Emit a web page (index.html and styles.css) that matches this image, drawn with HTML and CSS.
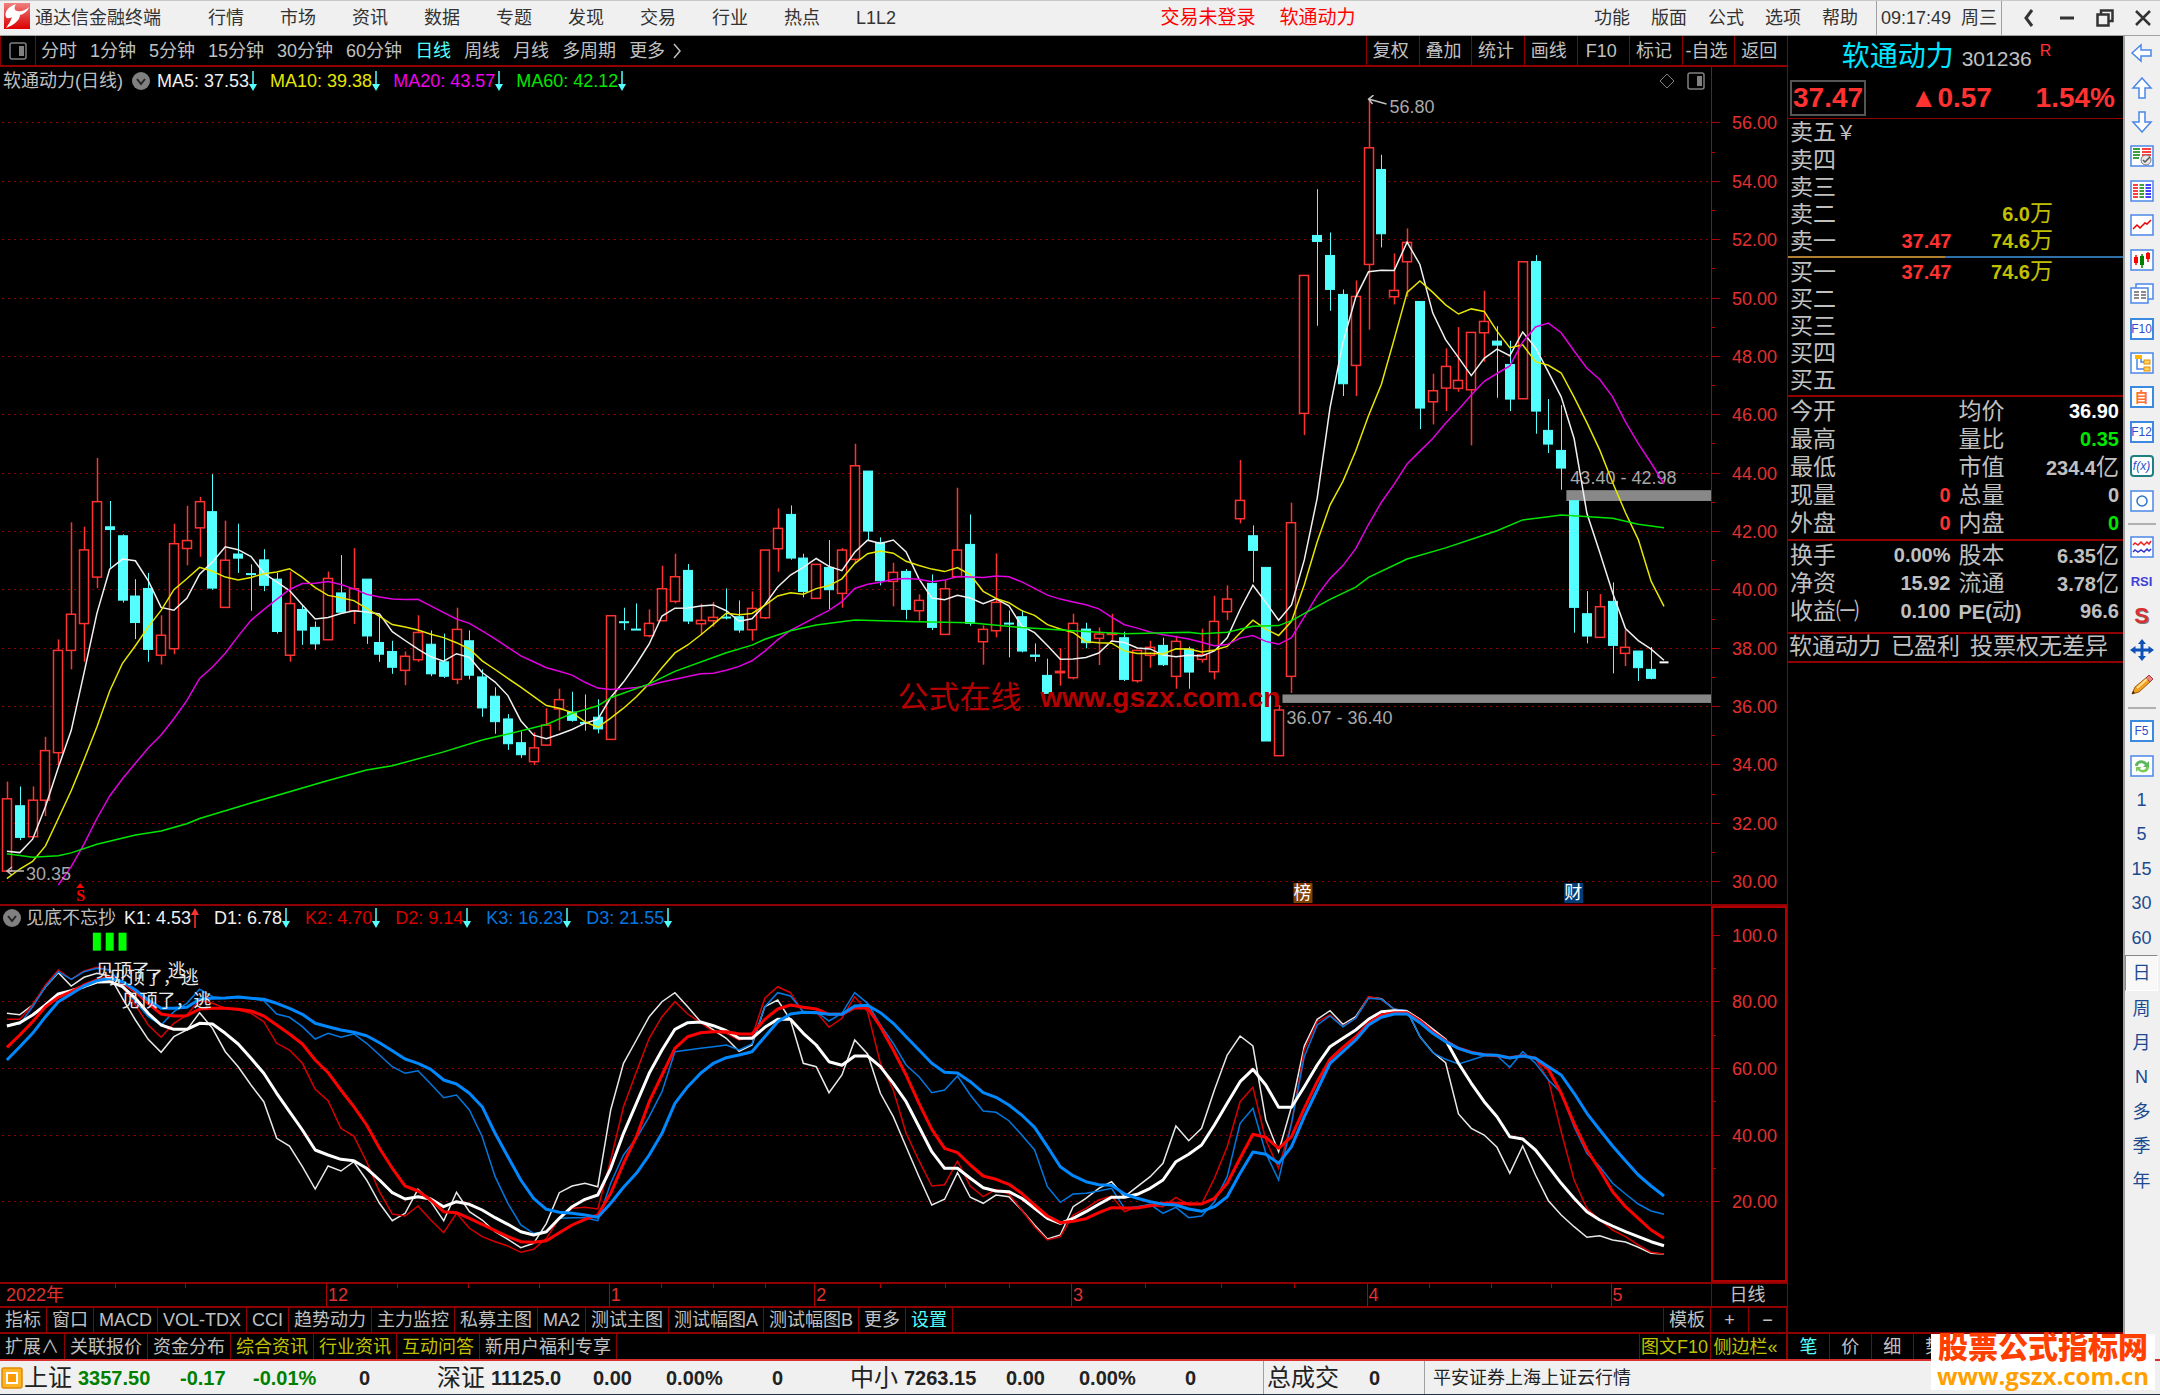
FILE: index.html
```html
<!DOCTYPE html>
<html lang="zh-CN">
<head>
<meta charset="utf-8">
<title>通达信金融终端</title>
<link rel="stylesheet" href="styles.css">
</head>
<body>

<svg width="0" height="0" class="defs">
  <symbol id="down" viewBox="0 0 8 20"><path d="M4 0V16" stroke="#54ffff" stroke-width="1.5"/><path d="M0 13H8L4 20Z" fill="#54ffff"/></symbol>
  <symbol id="up" viewBox="0 0 8 20"><path d="M4 20V4" stroke="#ff3232" stroke-width="1.5"/><path d="M0 7H8L4 0Z" fill="#ff3232"/></symbol>
  <symbol id="chev" viewBox="0 0 18 18"><circle cx="9" cy="9" r="9" fill="#808080"/><path d="M5 7L9 12L13 7" fill="none" stroke="#222" stroke-width="2"/></symbol>
  <symbol id="pane" viewBox="0 0 18 18"><rect x="1" y="1" width="16" height="16" rx="2" fill="none" stroke="#808080" stroke-width="1.5"/><rect x="10" y="4" width="5" height="10" fill="#808080"/></symbol>
</svg>

<div class="app">

  <!-- title bar -->
  <header class="title">
    <svg class="logo" viewBox="0 0 26 26"><defs><linearGradient id="lg" x1="0" y1="0" x2="0" y2="1"><stop offset="0" stop-color="#f08080"/><stop offset="0.6" stop-color="#e03030"/><stop offset="1" stop-color="#e00000"/></linearGradient></defs><rect width="26" height="26" fill="url(#lg)"/><path d="M12 1C4 4 0 9 2 14C4 17 8 14 8 14C7 18 4 22 2 25C10 22 16 17 16 12C20 11 24 8 25 4C22 7 17 9 13 8C10 7 10 4 12 1Z" fill="#fff"/></svg>
    <span class="name">通达信金融终端</span>
    <nav class="menu">
      <button>行情</button><button>市场</button><button>资讯</button><button>数据</button><button>专题</button><button>发现</button><button>交易</button><button>行业</button><button>热点</button><button>L1L2</button>
    </nav>
    <div class="login"><a href="#">交易未登录</a><a href="#">软通动力</a></div>
    <nav class="menu2">
      <button>功能</button><button>版面</button><button>公式</button><button>选项</button><button>帮助</button>
    </nav>
    <div class="clock"><span>09:17:49</span><span>周三</span></div>
    <div class="win">
      <button aria-label="返回"><svg viewBox="0 0 18 18"><path d="M12 1L6 9L12 17" fill="none" stroke="#333" stroke-width="3"/></svg></button>
      <button aria-label="最小化"><svg viewBox="0 0 18 18"><path d="M2 9H16" stroke="#333" stroke-width="3"/></svg></button>
      <button aria-label="还原"><svg viewBox="0 0 18 18"><path d="M5 5V1.5H16.5V12H13" fill="none" stroke="#333" stroke-width="2.5"/><rect x="1.5" y="5.5" width="11" height="11" fill="none" stroke="#333" stroke-width="2.5"/></svg></button>
      <button aria-label="关闭"><svg viewBox="0 0 18 18"><path d="M2 2L16 16M16 2L2 16" stroke="#333" stroke-width="2.5"/></svg></button>
    </div>
  </header>

  <div class="work">

    <!-- charts -->
    <main class="left">
      <div class="periods">
        <button class="box" aria-label="侧栏"><svg width="18" height="18"><use href="#pane"/></svg></button>
        <button>分时</button><button>1分钟</button><button>5分钟</button><button>15分钟</button><button>30分钟</button><button>60分钟</button><button class="on">日线</button><button>周线</button><button>月线</button><button>多周期</button><button class="more">更多<svg width="8" height="16" viewBox="0 0 8 16"><path d="M1 1L7 8L1 15" fill="none" stroke="#c0c0c0" stroke-width="1.5"/></svg></button>
        <div class="tools">
          <button>复权</button><button>叠加</button><button>统计</button><button>画线</button><button>F10</button><button>标记</button><button>-自选</button><button>返回</button>
        </div>
      </div>

      <section class="pane main">
        <div class="plot">
          <div class="legend">
            <span class="grey">软通动力(日线)</span>
            <svg class="chev"><use href="#chev"/></svg>
            <span class="white">MA5: 37.53<svg class="arr"><use href="#down"/></svg></span>
            <span class="yellow">MA10: 39.38<svg class="arr"><use href="#down"/></svg></span>
            <span class="pink">MA20: 43.57<svg class="arr"><use href="#down"/></svg></span>
            <span class="green">MA60: 42.12<svg class="arr"><use href="#down"/></svg></span>
            <span class="ends"><svg width="16" height="18"><path d="M8 2L15 9L8 16L1 9Z" fill="none" stroke="#808080"/></svg><svg width="18" height="18"><use href="#pane"/></svg></span>
          </div>
          <svg class="draw" id="kline"></svg>
        </div>
        <svg class="axis" id="kaxis"></svg>
      </section>

      <section class="pane sub">
        <div class="plot">
          <div class="legend">
            <svg class="chev"><use href="#chev"/></svg>
            <span class="grey">见底不忘抄</span>
            <span class="white">K1: 4.53<svg class="arr"><use href="#up"/></svg></span>
            <span class="white">D1: 6.78<svg class="arr"><use href="#down"/></svg></span>
            <span class="red">K2: 4.70<svg class="arr"><use href="#down"/></svg></span>
            <span class="red">D2: 9.14<svg class="arr"><use href="#down"/></svg></span>
            <span class="blue">K3: 16.23<svg class="arr"><use href="#down"/></svg></span>
            <span class="blue">D3: 21.55<svg class="arr"><use href="#down"/></svg></span>
          </div>
          <svg class="draw" id="osc"></svg>
        </div>
        <svg class="axis" id="oaxis"></svg>
      </section>

      <div class="dates"><svg id="dates"></svg><button>日线</button></div>

      <div class="tabs">
        <button>指标</button><button>窗口</button><button>MACD</button><button>VOL-TDX</button><button>CCI</button><button>趋势动力</button><button>主力监控</button><button>私募主图</button><button>MA2</button><button>测试主图</button><button>测试幅图A</button><button>测试幅图B</button><button>更多</button><button class="on">设置</button>
        <span class="fill"></span>
        <button>模板</button><button class="half">+</button><button class="half">−</button>
      </div>
      <div class="tabs second">
        <button>扩展∧</button><button>关联报价</button><button>资金分布</button><button class="gold">综合资讯</button><button class="gold">行业资讯</button><button class="gold">互动问答</button><button>新用户福利专享</button>
        <span class="fill"></span>
        <button class="gold f10">图文F10</button><button class="gold wide">侧边栏«</button>
      </div>
    </main>

    <!-- quote panel -->
    <aside class="quote">
      <div class="head"><b>软通动力</b><span>301236</span><sup>R</sup></div>
      <div class="last"><span class="now">37.47</span><span>▲0.57</span><span>1.54%</span></div>
      <table class="book sell">
        <tr><th>卖五<i>￥</i></th><td></td><td></td></tr>
        <tr><th>卖四</th><td></td><td></td></tr>
        <tr><th>卖三</th><td></td><td></td></tr>
        <tr><th>卖二</th><td></td><td class="vol">6.0<i>万</i></td></tr>
        <tr><th>卖一</th><td class="up">37.47</td><td class="vol">74.6<i>万</i></td></tr>
      </table>
      <div class="ratio"></div>
      <table class="book">
        <tr><th>买一</th><td class="up">37.47</td><td class="vol">74.6<i>万</i></td></tr>
        <tr><th>买二</th><td></td><td></td></tr>
        <tr><th>买三</th><td></td><td></td></tr>
        <tr><th>买四</th><td></td><td></td></tr>
        <tr><th>买五</th><td></td><td></td></tr>
      </table>
      <table class="stats">
        <tr><th>今开</th><td></td><th>均价</th><td class="w">36.90</td></tr>
        <tr><th>最高</th><td></td><th>量比</th><td class="dn">0.35</td></tr>
        <tr><th>最低</th><td></td><th>市值</th><td>234.4<i>亿</i></td></tr>
        <tr><th>现量</th><td class="up">0</td><th>总量</th><td>0</td></tr>
        <tr><th>外盘</th><td class="up">0</td><th>内盘</th><td class="dn">0</td></tr>
      </table>
      <table class="stats tall">
        <tr><th>换手</th><td>0.00%</td><th>股本</th><td>6.35<i>亿</i></td></tr>
        <tr><th>净资</th><td>15.92</td><th>流通</th><td>3.78<i>亿</i></td></tr>
        <tr><th>收益㈠</th><td>0.100</td><th><em>PE(</em>动<em>)</em></th><td>96.6</td></tr>
      </table>
      <div class="note"><span>软通动力</span><span>已盈利</span><span>投票权无差异</span></div>
      <div class="qtabs"><button class="on">笔</button><button>价</button><button>细</button><button>势</button><span></span><span></span><span></span><span></span></div>
    </aside>

    <!-- icon strip -->
    <nav class="strip"><div class="strip-in">
      <button aria-label="后退"><svg viewBox="0 0 24 22"><path d="M2 11L11 3V8H21V14H11V19Z" fill="#fff" stroke="#4a86e8" stroke-width="1.5"/></svg></button>
      <button aria-label="上"><svg viewBox="0 0 24 22"><path d="M12 1L21 11H15V21H9V11H3Z" fill="#fff" stroke="#4a86e8" stroke-width="1.5"/></svg></button>
      <button aria-label="下"><svg viewBox="0 0 24 22"><path d="M12 21L21 11H15V1H9V11H3Z" fill="#fff" stroke="#4a86e8" stroke-width="1.5"/></svg></button>
      <button aria-label="选股"><svg viewBox="0 0 24 22"><rect x="1" y="1" width="22" height="20" fill="#fff" stroke="#4a86e8" stroke-width="1.5"/><path d="M3 4H10M3 7H10M3 10H10M3 13H9" stroke="#008000" stroke-width="1.5"/><path d="M12 4H21M12 7H21M12 10H21" stroke="#f00" stroke-width="1.5"/><circle cx="16" cy="15" r="5" fill="#e8e8e8" stroke="#777"/><path d="M13 15L15 17L20 12" fill="none" stroke="#555" stroke-width="1.5"/></svg></button>
      <button aria-label="报价"><svg viewBox="0 0 24 22"><rect x="1" y="1" width="22" height="20" fill="#fff" stroke="#4a86e8" stroke-width="1.5"/><g stroke-width="1.5"><path d="M3 5H8M3 8H8M3 11H8M3 14H8M3 17H8" stroke="#f00"/><path d="M9.500 5H14M9.500 8H14M9.500 11H14M9.500 14H14M9.500 17H14" stroke="#008000"/><path d="M15.500 5H21M15.500 8H21M15.500 11H21M15.500 14H21M15.500 17H21" stroke="#00f"/></g></svg></button>
      <button aria-label="分时"><svg viewBox="0 0 24 22"><rect x="1" y="1" width="22" height="20" fill="#fff" stroke="#4a86e8" stroke-width="1.5"/><path d="M3 15L7 11L10 14L15 9L17 10L21 6" fill="none" stroke="#e00" stroke-width="1.5"/></svg></button>
      <button aria-label="K线"><svg viewBox="0 0 24 22"><rect x="1" y="1" width="22" height="20" fill="#fff" stroke="#4a86e8" stroke-width="1.5"/><path d="M6 6V16M18 3V13" stroke="#f00" stroke-width="1.5"/><path d="M12 5V19" stroke="#008000" stroke-width="1.5"/><rect x="4" y="8" width="4" height="6" fill="#f00"/><rect x="10" y="7" width="4" height="9" fill="#008000"/><rect x="16" y="4" width="4" height="6" fill="#f00"/></svg></button>
      <button aria-label="资料"><svg viewBox="0 0 24 22"><rect x="6" y="1" width="17" height="15" fill="#fff" stroke="#4a86e8" stroke-width="1.5"/><rect x="1" y="5" width="17" height="15" fill="#fff" stroke="#4a86e8" stroke-width="1.5"/><path d="M4 9H9M4 12H9M4 15H9M11 9H16M11 12H16M11 15H16" stroke="#666" stroke-width="1.5"/></svg></button>
      <button><span class="key">F10</span></button>
      <button aria-label="树"><svg viewBox="0 0 24 22"><rect x="1" y="1" width="22" height="20" fill="#fff" stroke="#4a86e8" stroke-width="1.5"/><path d="M7 6V17H15M11 6V10H15" fill="none" stroke="#4a86e8" stroke-width="1.5"/><rect x="5" y="3" width="7" height="4" fill="#ffb400"/><rect x="14" y="8" width="6" height="4" fill="#ffd060" stroke="#e09000"/><rect x="14" y="15" width="6" height="4" fill="#ffd060" stroke="#e09000"/></svg></button>
      <button><span class="key self">自</span></button>
      <button><span class="key">F12</span></button>
      <button><span class="key fx">f(x)</span></button>
      <button aria-label="圈"><svg viewBox="0 0 24 22"><rect x="1" y="1" width="22" height="20" fill="#fff" stroke="#4a86e8" stroke-width="1.5"/><circle cx="12" cy="11" r="5" fill="none" stroke="#2a76c8" stroke-width="1.5"/></svg></button>
      <hr>
      <button aria-label="叠加"><svg viewBox="0 0 24 22"><rect x="1" y="1" width="22" height="20" fill="#fff" stroke="#4a86e8" stroke-width="1.5"/><path d="M3 9L5 7L8 9L11 6L14 9L17 6L19 8L21 5" fill="none" stroke="#e22" stroke-width="1.5"/><path d="M3 16L5 14L8 16L11 14L14 16L17 13L19 15L21 13" fill="none" stroke="#33c" stroke-width="1.5"/></svg></button>
      <button class="rsi">RSI</button>
      <button class="ess">S</button>
      <button aria-label="移动"><svg viewBox="0 0 24 22"><path d="M12 0L16 5H13.500V9.500H18.500V7L24 11L18.500 15V12.500H13.500V17H16L12 22L8 17H10.500V12.500H5.500V15L0 11L5.500 7V9.500H10.500V5H8Z" fill="#0c50b8"/></svg></button>
      <button aria-label="画笔"><svg viewBox="0 0 24 22"><path d="M2 20L5 13L17 3L21 7L9 18Z" fill="#f0a020" stroke="#a05a10"/><path d="M16 4L19 1L23 5L20 8Z" fill="#f08080" stroke="#a04040"/><path d="M2 20L3 17L5 19Z" fill="#222"/><path d="M7 14L17 5" stroke="#ffe08a" stroke-width="2"/></svg></button>
      <hr>
      <button><span class="key">F5</span></button>
      <button aria-label="刷新"><svg viewBox="0 0 24 22"><rect x="1" y="1" width="22" height="20" fill="#fff" stroke="#4a86e8" stroke-width="1.5"/><path d="M5 11C5 5 13 3 17 8L19 6V12H13L15 10C12 7 8 8 8 11Z" fill="#5cb85c"/><path d="M19 12C19 18 11 19 8 15L6 17V12H11L10 14C12 16 16 15 16 12Z" fill="#7acc5a"/></svg></button>
      <button>1</button><button>5</button><button>15</button><button>30</button><button>60</button><button class="cur">日</button><button>周</button><button>月</button><button>N</button><button>多</button><button>季</button><button>年</button>
    </div></nav>
  </div>

  <!-- status bar -->
  <footer class="status">
    <svg class="coin" viewBox="0 0 22 22"><rect x="1" y="1" width="20" height="20" rx="2" fill="#ffb428" stroke="#e08a00" stroke-width="1.5"/><rect x="6" y="6" width="10" height="10" fill="#ff9a00" stroke="#fff" stroke-width="2"/></svg>
    <div class="index fall"><span>上证</span><b>3357.50</b><b>-0.17</b><b>-0.01%</b><b class="amt">0</b></div>
    <div class="index"><span>深证</span><b>11125.0</b><b>0.00</b><b>0.00%</b><b>0</b></div>
    <div class="index"><span>中小</span><b>7263.15</b><b>0.00</b><b>0.00%</b><b>0</b></div>
    <div class="total"><span>总成交</span><b>0</b></div>
    <div class="server">平安证券上海上证云行情</div>
  </footer>

  <div class="badge"><b>股票公式指标网</b><span>www.gszx.com.cn</span></div>
</div>

<script src="chart.js"></script>
</body>
</html>
```
FILE: styles.css
```css
* {
  box-sizing: border-box;
}
body {
  margin: 0;
  background: #000;
  color: #c0c0c0;
  font-family: "Liberation Sans", "Noto Sans CJK SC", sans-serif;
  font-size: 18px;
  line-height: 24px;
}
button {
  margin: 0;
  padding: 0;
  border: 0;
  background: none;
  color: inherit;
  font: inherit;
  white-space: nowrap;
}
a {
  color: inherit;
  text-decoration: none;
}
i, em {
  font-style: normal;
}
.defs {
  position: absolute;
}
.app {
  display: flex;
  flex-direction: column;
  height: 100vh;
  min-height: 1250px;
  position: relative;
  border-bottom: 1px solid #203040;
}

/* title bar */
.title {
  display: flex;
  align-items: center;
  flex: none;
  height: 36px;
  background: #f0f0f0;
  color: #333;
  border-top: 1px solid #c8c8c8;
  border-bottom: 1px solid #a0a0a0;
}
.logo {
  width: 26px;
  height: 26px;
  margin: 0 5px 4px 4px;
}
.menu {
  display: flex;
  gap: 36px;
  margin-left: 47px;
}
.login {
  display: flex;
  gap: 24px;
  margin: 0 auto;
  padding-left: 26px;
  font-size: 19px;
  color: #ff0000;
}
.menu2 {
  display: flex;
  gap: 21px;
  margin-right: 18px;
}
.clock {
  display: flex;
  align-items: center;
  gap: 10px;
  align-self: stretch;
  padding: 0 4px;
  border-left: 1px solid #a0a0a0;
  border-right: 1px solid #a0a0a0;
}
.win {
  display: flex;
  gap: 20px;
  padding: 0 8px 0 18px;
}
.win svg {
  display: block;
  width: 18px;
  height: 18px;
}

.work {
  display: flex;
  flex: 1;
  min-height: 0;
}
.left {
  display: flex;
  flex-direction: column;
  flex: 1;
  min-width: 0;
}

/* period bar */
.periods {
  display: flex;
  align-items: center;
  gap: 13px;
  flex: none;
  height: 31px;
  border-bottom: 2px solid #900000;
}
.periods .box {
  width: 36px;
  height: 29px;
  margin-right: -8px;
  border-left: 1px solid #900000;
  border-right: 1px solid #900000;
}
.periods .box svg {
  display: block;
  margin: 0 auto;
}
.on {
  color: #54ffff;
}
.more {
  display: flex;
  align-items: center;
  gap: 8px;
}
.tools {
  display: flex;
  width: 421px;
  height: 29px;
  margin-left: auto;
}
.tools button {
  flex: 1;
  padding-right: 4px;
  border-left: 1px solid #900000;
}

/* chart panes */
.pane {
  display: flex;
  min-height: 0;
}
.main {
  flex: 838 1 0;
  border-bottom: 2px solid #900000;
}
.sub {
  flex: 377 1 0;
}
.plot {
  display: flex;
  flex-direction: column;
  flex: 1;
  min-width: 0;
}
.draw {
  display: block;
  flex: 1;
  width: 100%;
  min-height: 0;
}
.axis {
  display: block;
  flex: none;
  width: 76px;
  height: 100%;
  border-left: 1px solid #b00000;
}
.sub .axis {
  border: 2px solid #b00000;
}
.legend {
  display: flex;
  align-items: center;
  flex: none;
  height: 28px;
  gap: 13px;
  padding: 0 6px 0 3px;
}
.sub .legend {
  height: 24px;
  gap: 15px;
}
.legend span {
  display: flex;
  align-items: center;
}
.chev {
  width: 18px;
  height: 18px;
  margin: 0 -6px 0 -4px;
}
.sub .chev {
  margin: 0 -10px 0 0;
}
.sub .grey {
  margin-right: -7px;
}
.arr {
  width: 8px;
  height: 20px;
}
.legend .ends {
  gap: 12px;
  margin-left: auto;
}
.grey { color: #c0c0c0; }
.white { color: #f0f0f0; }
.yellow { color: #e6e600; }
.pink { color: #f000f0; }
.green { color: #00e600; }
.red { color: #d80000; }
.blue { color: #0078e0; }

/* chart drawing */
svg text {
  font-size: 18px;
  fill: #a8a8a8;
}
.grid { stroke: #900000; stroke-dasharray: 2 4; }
.tick { stroke: #b00000; }
svg text.scale { fill: #e03030; }
.rise { fill: #000; stroke: #ff3232; stroke-width: 1.5; }
.fall-bar { fill: #54ffff; stroke: #54ffff; }
.flat { stroke: #fff; stroke-width: 2; }
.line { fill: none; stroke-width: 1.5; }
.thick { fill: none; stroke-width: 3; stroke-linejoin: round; }
.gap { fill: #888; }
.hint { stroke: #c0c0c0; stroke-width: 1.5; fill: none; }
svg text.mark { fill: #b40000; font-size: 31px; }
svg text.mark.url { font-size: 28px; font-weight: bold; }
svg text.tag { fill: #fff; }
svg text.shout { fill: #e8e8e8; }
svg text.s { fill: #ff0000; font-size: 16px; font-weight: bold; font-family: "Liberation Serif", serif; }

.dates {
  display: flex;
  flex: none;
  height: 24px;
  border-top: 2px solid #900000;
}
.dates svg {
  display: block;
  flex: 1;
  min-width: 0;
  height: 22px;
}
.dates button {
  width: 76px;
  padding-right: 4px;
  line-height: 20px;
  border-left: 1px solid #900000;
}

/* tab rows */
.tabs {
  display: flex;
  flex: none;
  height: 26px;
  border-top: 2px solid #900000;
}
.second {
  height: 27px;
}
.tabs button {
  padding: 0 5px;
  border-right: 1px solid #900000;
}
.fill {
  flex: 1;
  border-right: 1px solid #900000;
}
.tabs .half {
  width: 38px;
}
.tabs .wide {
  width: 76px;
  padding: 0 6px 0 0;
}
.tabs .f10 {
  padding: 0 2px 0 1px;
}
.gold {
  color: #c0c000;
}

/* quote panel */
.quote {
  display: flex;
  flex-direction: column;
  flex: none;
  width: 336px;
  border-left: 1px solid #900000;
}
.head {
  display: flex;
  align-items: center;
  justify-content: center;
  gap: 8px;
  height: 42px;
  padding-right: 18px;
}
.head b {
  color: #00e5ff;
  font-size: 28px;
  font-weight: normal;
}
.head span {
  font-size: 21px;
  padding-top: 4px;
}
.head sup {
  color: #ff3232;
  font-size: 16px;
  line-height: 16px;
  padding-bottom: 12px;
}
.last {
  display: flex;
  align-items: center;
  justify-content: space-between;
  height: 41px;
  padding: 0 8px 0 2px;
  border-bottom: 1px solid #900000;
  color: #ff3232;
  font-size: 28px;
  font-weight: bold;
}
.now {
  padding: 4px 1px;
  border: 2px solid #555;
}
table {
  width: 100%;
  border-collapse: collapse;
  table-layout: fixed;
}
th, td {
  height: 27px;
  padding: 0;
  line-height: 26px;
}
th {
  text-align: left;
  font-size: 23px;
  font-weight: normal;
  white-space: nowrap;
}
th i {
  font-size: 20px;
}
td {
  text-align: right;
  font-size: 20px;
  font-weight: bold;
  white-space: nowrap;
}
td i {
  font-size: 23px;
  font-weight: normal;
}
em {
  font-size: 20px;
  font-weight: bold;
}
.book {
  width: 263px;
  margin: 0 0 2px 2px;
}
.book th {
  width: 60px;
}
.book .vol {
  color: #c0c000;
}
.up { color: #ff3232; }
.dn { color: #00e600; }
.w { color: #fff; }
.ratio {
  height: 2px;
  flex: none;
  background: linear-gradient(to right, #b08030 47%, #3070a8 47%);
}
.stats {
  border-top: 2px solid #900000;
  border-collapse: separate;
  border-spacing: 0;
  padding: 0 4px 2px 2px;
}
.stats th, .stats td {
  height: 28px;
}
.stats th {
  width: 72px;
}
.stats th + td + th {
  padding-left: 8px;
  width: 80px;
}
.tall {
  padding-bottom: 7px;
}
.note {
  display: flex;
  gap: 10px;
  padding: 0 1px 2px;
  border-top: 2px solid #900000;
  border-bottom: 2px solid #900000;
  font-size: 23px;
  line-height: 25px;
  white-space: nowrap;
}
.qtabs {
  display: flex;
  height: 27px;
  margin-top: auto;
  border-top: 2px solid #900000;
}
.qtabs button, .qtabs span {
  flex: 1;
  border-right: 1px solid #900000;
}

/* icon strip */
.strip {
  flex: none;
  width: 37px;
  padding-right: 2px;
  background: #f0f0f0;
  border-left: 2px solid #a0a0a0;
}
.strip-in {
  display: flex;
  flex-direction: column;
  height: 100%;
  max-height: 1162px;
}
.strip button {
  display: flex;
  align-items: center;
  justify-content: center;
  flex: 1 1 0;
  min-height: 0;
  color: #1c4a90;
}
.strip svg {
  width: 24px;
  height: 22px;
}
.strip hr {
  width: 28px;
  height: 2px;
  margin: 5px auto;
  border: 0;
  background: #b0b0b0;
}
.key {
  width: 24px;
  height: 22px;
  border: 2px solid #3c8ae0;
  background: #fff;
  color: #2a50d0;
  font-size: 12px;
  line-height: 18px;
  display: flex;
  justify-content: center;
}
.self {
  color: #ff7030;
  font-size: 14px;
  font-weight: bold;
}
.fx {
  border-color: #208080;
  border-radius: 4px;
  font-style: italic;
}
.strip .rsi {
  color: #4040d8;
  font-size: 13px;
  font-weight: bold;
}
.strip .ess {
  color: #d83030;
  font-size: 22px;
  font-weight: bold;
  text-shadow: 1px 1px 0 #777;
}
.strip .cur {
  border: 1px solid #fff;
  border-top-color: #888;
  border-left-color: #888;
  background: #f8f8f8;
}

/* status bar */
.status {
  display: flex;
  align-items: center;
  flex: none;
  height: 35px;
  background: #f0f0f0;
  color: #222;
  border-top: 2px solid #d83030;
  white-space: nowrap;
}
.coin {
  width: 22px;
  height: 22px;
  margin: 0 1px;
}
.index {
  display: grid;
  grid-template-columns: 54px 102px 73px 106px 78px;
  align-items: center;
}
.index span, .total span {
  font-size: 24px;
}
.index b, .total b {
  font-size: 20px;
}
.fall {
  color: #008000;
}
.fall span, .fall .amt {
  color: #222;
}
.total {
  display: flex;
  align-items: center;
  gap: 30px;
  width: 162px;
  height: 33px;
  padding-left: 3px;
  border-left: 1px solid #a0a0a0;
  border-right: 1px solid #a0a0a0;
}
.server {
  padding-left: 8px;
}

/* site badge over the bottom right corner */
.badge {
  position: absolute;
  right: 5px;
  bottom: 4px;
  display: flex;
  flex-direction: column;
  align-items: center;
  padding: 0 6px;
  background: #fff;
  font-weight: bold;
  line-height: 28px;
}
.badge b {
  color: #ff4000;
  font-size: 30px;
}
.badge span {
  color: #ffa000;
  font-family: "Open Sans", sans-serif;
  font-size: 24px;
}
```
FILE: chart.js
```js
// Quotes are packed per block: price = base - v / step
// row = high, body top, body bottom, low, 1 up / 0 down
var blocks = [
  { base: 46.486, step: 84.76, rows: [
    [1108,1158,1368,1368,1],[1122,1178,1270,1278,0],[1122,1162,1268,1268,1],[978,1018,1162,1208,1],
    [695,727,1024,1060,1],[355,622,727,782,1],[368,435,649,760,1],[168,295,514,546,1],
    [293,368,376,487,0],[390,394,581,588,0],[520,569,646,694,0],[502,547,724,760,0],
    [625,683,741,768,1],[359,417,722,738,1],[307,408,431,480,1],[281,295,371,455,1],
    [215,324,546,551,0],[350,465,602,602,1],[359,447,459,502,0],[477,504,506,612,0],
    [433,464,538,555,0],[502,520,672,678,0],[498,591,741,760,1],[596,608,668,711,0],
    [643,660,708,725,0],[498,518,696,696,1],[450,560,616,616,0],[430,548,612,650,1],
    [520,520,685,708,0],[625,704,738,760,0],[699,730,776,795,0],[730,744,785,828,1],
    [625,675,754,760,1],[669,709,795,802,0],[678,760,802,807,0],[603,666,811,825,1],
    [669,699,799,811,0],[782,804,894,920,0],[834,860,934,969,0],[912,926,998,1016,0],
    [962,995,1030,1039,0],[965,1010,1050,1060,1],[895,944,1002,1002,1],[838,870,897,960,1],
    [847,906,930,934,0],[855,936,938,960,0],[869,921,955,968,0]
  ] },
  { base: 46.486, step: 87.57, rows: [
    [647,647,1018,1018,1],[623,665,667,690,0],[610,687,689,690,0],[628,670,707,712,1],
    [497,566,662,662,1],[461,530,604,610,1],[492,511,663,672,0],[611,661,671,705,1],
    [606,652,662,680,1],[565,651,653,658,0],[601,650,690,698,0],[574,625,689,722,1],
    [450,450,653,657,1],[325,385,446,515,1],[316,343,474,479,0],[461,474,574,592,0],
    [493,493,595,595,1],[420,502,569,628,0],[444,450,580,623,1],[131,197,478,490,1],
    [213,213,393,422,0],[412,427,542,556,0],[488,517,544,619,1],[507,514,628,658,0],
    [583,601,632,662,1],[523,550,682,690,0],[540,566,703,703,1],[263,450,530,530,1],
    [343,433,670,677,0],[676,688,725,794,1],[460,607,692,712,1],[631,669,671,772,0],
    [631,650,753,757,0],[730,765,769,785,0],[776,826,880,880,0],[744,814,818,857,1],
    [641,670,833,838,1],[668,687,728,745,0],[682,702,715,795,1],[641,700,702,725,1],
    [695,713,838,843,0],[750,751,842,848,1],[722,742,766,803,1],[713,736,794,798,0],
    [707,724,829,866,1],[740,747,816,866,0],[686,764,778,788,1],[587,664,815,838,1]
  ] },
  { base: 44.431, step: 87.57, rows: [
    [376,417,455,480,1],[0,121,176,190,1],[196,227,271,367,0],[322,322,843,843,0],
    [735,750,887,887,1],[128,188,649,699,1]
  ] },
  { base: 57.449, step: 87.57, rows: [
    [585,586,1000,1065,1],[327,466,484,737,0],[457,526,628,692,0],[628,643,911,948,0],
    [601,649,856,948,1],[60,203,553,749,1],[224,268,461,502,0],[520,631,650,673,1],
    [445,487,545,650,1],[664,664,984,1047,0],[881,932,965,1033,1],[805,859,924,993,1],
    [741,901,925,935,1],[757,757,929,1096,1],[632,724,758,845,1],[738,783,795,953,0],
    [782,853,957,993,0],[545,545,956,956,1],[525,544,993,1061,0],[957,1051,1092,1119,0],
    [975,1111,1164,1229,0]
  ] },
  { base: 44.431, step: 87.57, rows: [
    [122,122,442,518,0],[393,461,528,550,0],[402,440,532,532,1],[367,424,556,640,0],
    [510,562,580,618,1],[573,573,623,663,0],[561,628,655,658,0],[607,607,607,607,2]
  ] }
];

// averages before the window is long enough
var seed5 = [31.03, 30.98, 31.44, 32.56];
var seed10 = [30.09, 30.42, 30.68, 31.21, 32.15, 33.10, 34.16, 35.28, 36.52];
var seed20 = [null, null, null, null, 29.87, 30.50, 31.27, 32.15, 32.92, 33.51, 34.04, 34.57,
  35.01, 35.57, 36.19, 36.95, 37.34, 37.81, 38.40];
var ma60 = [[0,30.94],[2,30.82],[4,30.87],[5,30.97],[7,31.27],[10,31.58],[12,31.72],[14,31.97],[15,32.15],
  [19,32.68],[25,33.45],[28,33.81],[30,33.96],[34,34.43],[37,34.84],[39,35.04],[42,35.37],[44,35.75],
  [46,36.01],[47,36.29],[50,36.76],[52,37.19],[56,37.83],[58,38.09],[59,38.29],[61,38.58],[63,38.78],
  [66,38.95],[70,38.90],[75,38.86],[79,38.69],[83,38.58],[87,38.48],[92,38.53],[93,38.48],[95,38.53],
  [97,38.74],[99,38.76],[100,38.93],[103,39.66],[105,40.08],[106,40.41],[109,41.04],[112,41.42],
  [116,42.01],[118,42.38],[120,42.49],[121,42.55],[125,42.44],[127,42.23],[129,42.11]];

// oscillator lines, value = 113.4 - v / 10
var osc = {
  K1: [370,374,345,290,248,288,262,250,258,325,390,448,487,440,420,368,415,485,530,585,635,745,768,830,897,828,843,815,870,940,992,970,898,935,992,907,965,990,1025,1048,1073,1060,1000,908,888,880,890,660,520,450,380,335,308,350,395,420,445,484,465,350,330,390,520,530,608,555,450,
    492,610,680,770,860,945,928,848,922,940,915,920,960,1005,1047,1035,950,925,895,875,920,890,860,820,708,752,715,600,495,438,468,690,785,650,468,388,362,403,380,322,326,358,362,440,487,518,672,715,735,772,850,768,855,932,975,1010,1042,1037,1050,1056,1072,1090,1092],
  K2: [388,388,345,285,240,268,243,232,240,290,345,405,442,400,375,330,340,355,360,370,395,460,480,520,598,632,715,738,815,905,972,978,948,990,1028,970,1015,1040,1055,1068,1087,1078,1045,985,955,952,957,810,650,545,445,380,335,372,398,425,430,450,440,325,290,308,368,365,412,385,320,
    365,520,600,730,812,888,884,813,888,920,898,912,960,1010,1050,1040,975,955,930,918,965,950,948,950,922,945,942,865,770,635,592,750,835,700,480,395,375,408,385,320,328,358,365,388,425,450,475,487,494,497,503,497,505,570,725,870,955,990,1020,1040,1065,1087,1092],
  K3: [405,402,350,290,245,268,245,235,240,285,335,380,405,365,340,298,320,325,322,325,332,372,382,410,447,430,442,432,460,495,530,550,542,582,623,615,660,740,860,940,1005,1030,1025,985,983,983,992,880,795,745,680,605,485,480,475,470,465,480,462,350,308,318,365,365,393,370,308,
    340,405,460,525,560,608,600,558,615,663,667,692,735,780,890,937,912,910,903,895,955,950,943,970,952,983,978,935,860,700,655,790,870,700,500,405,378,410,385,325,328,358,362,440,488,508,522,510,497,497,532,485,520,570,608,710,790,830,880,912,942,963,973],
  D1: [408,398,375,345,312,302,290,276,275,290,325,370,405,418,418,400,402,430,462,505,550,610,665,720,780,795,808,812,835,870,908,927,920,927,950,935,943,960,983,1003,1025,1035,1025,985,950,928,915,835,730,640,550,480,418,398,396,407,422,445,445,412,388,388,430,465,515,526,498,
    498,530,580,635,710,785,835,835,865,893,903,905,925,955,985,1000,985,965,943,922,922,913,895,870,815,793,765,705,640,575,538,585,652,652,590,525,470,445,420,388,365,362,365,390,420,450,520,580,635,680,740,747,780,830,880,925,965,990,1008,1025,1040,1055,1067],
  D2: [472,435,395,350,322,305,285,270,262,278,305,340,372,378,377,357,355,355,358,363,378,405,432,462,510,548,600,650,705,775,835,888,903,930,965,968,985,1003,1022,1040,1055,1057,1052,1028,1005,988,975,910,820,740,635,555,475,440,428,425,425,432,432,388,357,345,352,357,373,373,354,
    354,410,480,555,640,718,775,788,825,858,868,883,910,945,978,998,994,986,968,953,954,954,947,940,940,941,942,925,880,805,733,742,775,740,655,575,508,472,440,400,375,368,368,392,425,452,475,487,494,497,503,497,505,538,610,700,780,840,905,950,985,1020,1045],
  D3: [510,470,430,380,335,312,288,272,265,275,300,330,355,355,352,328,325,324,321,325,328,340,355,373,400,410,420,427,437,458,482,507,520,538,570,582,610,650,730,800,870,925,958,967,970,975,982,940,892,850,795,730,640,590,550,520,503,495,485,440,395,372,367,368,373,373,348,
    346,368,400,440,480,520,547,549,575,608,622,645,675,712,770,830,857,875,884,886,912,925,935,943,945,957,964,950,920,850,786,793,820,770,680,600,520,485,450,405,382,372,372,398,430,455,475,488,494,496,504,498,505,530,555,610,670,720,768,812,855,888,918]
};

var months = [[25, '12'], [47, '1'], [63, '2'], [83, '3'], [106, '4'], [125, '5']];
var weeks = [8.4, 13.9, 30.4, 35.9, 41.4, 50.9, 55, 59, 68, 73, 78, 88.6, 94.5, 100.2, 110.7, 115.5, 120.2];

var candles = [];
blocks.forEach(function (b) {
  b.rows.forEach(function (r) {
    var p = r.slice(0, 4).map(function (v) { return b.base - v / b.step; });
    candles.push({ high: p[0], top: p[1], bottom: p[2], low: p[3], kind: r[4],
      close: r[4] ? p[1] : p[2] });
  });
});

function average(n, seed) {
  return candles.map(function (c, i) {
    if (i < n - 1) return seed[i];
    var sum = 0;
    for (var k = 0; k < n; k++) sum += candles[i - k].close;
    return sum / n;
  });
}

function add(parent, name, attrs, text) {
  var el = document.createElementNS('http://www.w3.org/2000/svg', name);
  for (var k in attrs) el.setAttribute(k, attrs[k]);
  if (text) el.textContent = text;
  parent.appendChild(el);
  return el;
}

function clear(id) {
  var el = document.getElementById(id);
  el.innerHTML = '';
  return el;
}

function line(svg, x1, y1, x2, y2, cls) {
  add(svg, 'line', { x1: x1, y1: y1, x2: x2, y2: y2, 'class': cls });
}

function path(svg, points, color, cls) {
  add(svg, 'polyline', { points: points.map(function (p) {
    return p[0].toFixed(1) + ',' + p[1].toFixed(1);
  }).join(' '), stroke: color, 'class': cls });
}

function draw() {
  var svg = clear('kline'), w = svg.clientWidth, h = svg.clientHeight;
  function x(i) { return w * (i + 0.54) / 133.2; }
  function y(p) { return h * (56.94 - p) / 27.72; }
  function half(v) { return Math.round(v) + 0.5; }
  function series(values) {
    var out = [];
    values.forEach(function (v, i) { if (v !== null) out.push([x(i), y(v)]); });
    return out;
  }
  var p;

  for (p = 30; p <= 56; p += 2) line(svg, 2, half(y(p)), w, half(y(p)), 'grid');

  // open price gaps
  add(svg, 'rect', { x: x(121.4), y: y(43.4), width: w - x(121.4), height: y(43.03) - y(43.4), 'class': 'gap' });
  add(svg, 'rect', { x: x(99.3), y: y(36.4), width: w - x(99.3), height: y(36.11) - y(36.4), 'class': 'gap' });
  add(svg, 'text', { x: x(121.4) + 4, y: y(43.4) - 6 }, '43.40 - 42.98');
  add(svg, 'text', { x: x(99.3) + 4, y: y(36.07) + 20 }, '36.07 - 36.40');

  candles.forEach(function (c, i) {
    var cx = half(x(i));
    if (c.kind == 2) {
      line(svg, cx - 5, y(c.close), cx + 4, y(c.close), 'flat');
      return;
    }
    var cls = c.kind ? 'rise' : 'fall-bar';
    line(svg, cx, y(c.high), cx, y(c.top), cls);
    line(svg, cx, y(c.bottom), cx, y(c.low), cls);
    add(svg, 'rect', { x: cx - 5, y: y(c.top), width: 9, height: Math.max(1, y(c.bottom) - y(c.top)), 'class': cls });
  });

  path(svg, series(average(5, seed5)), '#f0f0f0', 'line');
  path(svg, series(average(10, seed10)), '#e6e600', 'line');
  path(svg, series(average(20, seed20)), '#e000e0', 'line');
  path(svg, ma60.map(function (m) { return [x(m[0]), y(m[1])]; }), '#00e600', 'line');

  // highest and lowest
  var hx = x(106), hy = y(56.8);
  add(svg, 'path', { d: 'M' + (hx + 18) + ' ' + (hy + 5) + 'L' + hx + ' ' + hy + 'M' + (hx + 5) + ' ' + (hy - 4) + 'L' + hx + ' ' + hy + 'L' + (hx + 4) + ' ' + (hy + 5), 'class': 'hint' });
  add(svg, 'text', { x: hx + 21, y: hy + 14 }, '56.80');
  var lx = x(0), ly = y(30.35);
  add(svg, 'path', { d: 'M' + (lx + 17) + ' ' + ly + 'H' + lx + 'M' + (lx + 5) + ' ' + (ly - 4) + 'L' + lx + ' ' + ly + 'L' + (lx + 5) + ' ' + (ly + 4), 'class': 'hint' });
  add(svg, 'text', { x: lx + 19, y: ly + 9 }, '30.35');

  add(svg, 'text', { x: w * 0.5245, y: y(36) + 2, 'class': 'mark' }, '公式在线');
  add(svg, 'text', { x: w * 0.608, y: y(36) + 1, 'class': 'mark url' }, 'www.gszx.com.cn');

  // event marks
  add(svg, 'path', { d: 'M' + (x(5.7) - 4) + ' ' + (h - 16) + 'h8l-4 -5z', fill: '#f00' });
  add(svg, 'text', { x: x(5.7) - 4, y: h - 3, 'class': 's' }, 'S');
  add(svg, 'rect', { x: x(100) + 2, y: h - 21, width: 19, height: 20, fill: '#804000' });
  add(svg, 'text', { x: x(100) + 2, y: h - 5, 'class': 'tag' }, '榜');
  add(svg, 'rect', { x: x(121) + 3, y: h - 21, width: 19, height: 20, fill: '#003c78' });
  add(svg, 'text', { x: x(121) + 3, y: h - 5, 'class': 'tag' }, '财');

  var axis = clear('kaxis'), top = axis.clientHeight - h;
  for (p = 30; p <= 56; p++) {
    line(axis, 0, half(top + y(p)), p % 2 ? 3 : 8, half(top + y(p)), 'tick');
    if (p % 2 == 0) add(axis, 'text', { x: 20, y: top + y(p) + 7, 'class': 'scale' }, p + '.00');
  }

  // oscillator
  svg = clear('osc');
  h = svg.clientHeight;
  function v(n) { return h * (101.4 - n) / 105.6; }
  function curve(name) {
    return osc[name].map(function (n, i) { return [x(i), v(113.4 - n / 10)]; });
  }
  for (p = 20; p <= 80; p += 20) line(svg, 2, half(v(p)), w, half(v(p)), 'grid');
  path(svg, curve('K1'), '#e8e8e8', 'line');
  path(svg, curve('K2'), '#d80000', 'line');
  path(svg, curve('K3'), '#0078e0', 'line');
  path(svg, curve('D1'), '#ffffff', 'thick');
  path(svg, curve('D2'), '#ff0000', 'thick');
  path(svg, curve('D3'), '#0088ff', 'thick');
  for (p = 7; p < 10; p++) {
    add(svg, 'rect', { x: x(p) - 4, y: v(100.6), width: 8, height: 18, fill: '#0f0' });
    add(svg, 'text', { x: x(p) - 1, y: v([89, 87, 80][p - 7]) + 6, 'class': 'shout' }, '见顶了，逃');
  }

  axis = clear('oaxis');
  top = axis.parentNode.clientHeight - h - 2;
  for (p = 20; p <= 100; p += 10) {
    line(axis, 0, half(top + v(p)), p % 20 ? 3 : 7, half(top + v(p)), 'tick');
    if (p % 20 == 0) add(axis, 'text', { x: 19, y: top + v(p) + 7, 'class': 'scale' }, p == 100 ? '100.0' : p + '.00');
  }

  svg = clear('dates');
  add(svg, 'text', { x: 6, y: 17, 'class': 'scale' }, '2022年');
  months.forEach(function (m) {
    line(svg, half(x(m[0]) - 2), 0, half(x(m[0]) - 2), 22, 'tick');
    add(svg, 'text', { x: x(m[0]), y: 17, 'class': 'scale' }, m[1]);
  });
  weeks.forEach(function (i) { line(svg, half(x(i)), 0, half(x(i)), 4, 'tick'); });
}

draw();
window.addEventListener('resize', draw);
```
